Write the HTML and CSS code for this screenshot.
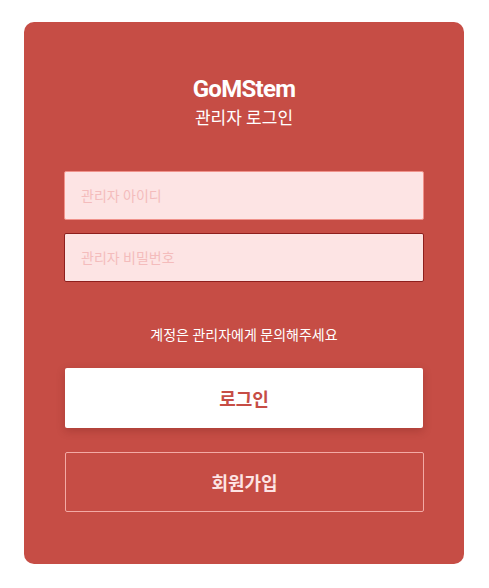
FILE: index.html
```html
<!DOCTYPE html>
<html lang="ko">
<head>
  <meta charset="UTF-8">
  <meta name="viewport" content="width=device-width, initial-scale=1.0">
  <title>GoMStem 관리자 로그인</title>
  <link rel="stylesheet" href="styles.css">
</head>
<body>

  <div class="login-card">
    <h1 class="brand">GoMStem</h1>
    <p class="subtitle">관리자 로그인</p>

    <form class="login-form" onsubmit="return false;">
      <input type="text" class="field" id="admin-id" placeholder="관리자 아이디">
      <input type="password" class="field field-active" id="admin-pw" placeholder="관리자 비밀번호">

      <p class="notice">계정은 관리자에게 문의해주세요</p>

      <button type="submit" class="btn btn-login">로그인</button>
      <button type="button" class="btn btn-signup">회원가입</button>
    </form>
  </div>

</body>
</html>
```

FILE: styles.css
```css
* {
  box-sizing: border-box;
  font-family: Roboto, "Noto Sans CJK KR", sans-serif;
}

body {
  margin: 0;
  padding: 22px 0 0;
  background-color: #ffffff;
}

.login-card {
  width: 440px;
  margin: 0 0 0 24px;
  padding: 51px 40px 52px;
  background-color: #c64d45;
  border-radius: 10px;
  text-align: center;
}

.brand {
  margin: 0;
  font-size: 24px;
  line-height: 32px;
  font-weight: 700;
  letter-spacing: -0.7px;
  color: #ffffff;
}

.subtitle {
  margin: 0;
  font-size: 17px;
  line-height: 27px;
  color: #ffffff;
}

.login-form {
  display: flex;
  flex-direction: column;
  margin-top: 39px;
}

/* text fields */
.field {
  width: 100%;
  height: 49px;
  padding: 0 16px;
  border: 1px solid #f0928b;
  border-radius: 2px;
  background-color: #fde4e4;
  font-size: 14px;
  color: #7a2a26;
  outline: none;
}

.field + .field {
  margin-top: 13px;
}

.field::placeholder {
  color: #f4bcbc;
}

.field-active {
  border-color: #8e1f1d;
}

.notice {
  margin: 43px 0 0;
  font-size: 14px;
  line-height: 20px;
  color: #ffffff;
}

/* buttons */
.btn {
  width: auto;
  height: 60px;
  margin-left: 1px;
  margin-right: 1px;
  border-radius: 2px;
  font-size: 18px;
  font-weight: 700;
  cursor: pointer;
}

.btn-login {
  margin-top: 23px;
  border: none;
  background-color: #ffffff;
  color: #c64d45;
  box-shadow: 0 3px 8px rgba(90, 20, 15, 0.25);
}

.btn-signup {
  margin-top: 24px;
  margin-right: 0;
  border: 1px solid #f3aaa5;
  background-color: transparent;
  color: #fde4e4;
}
```
